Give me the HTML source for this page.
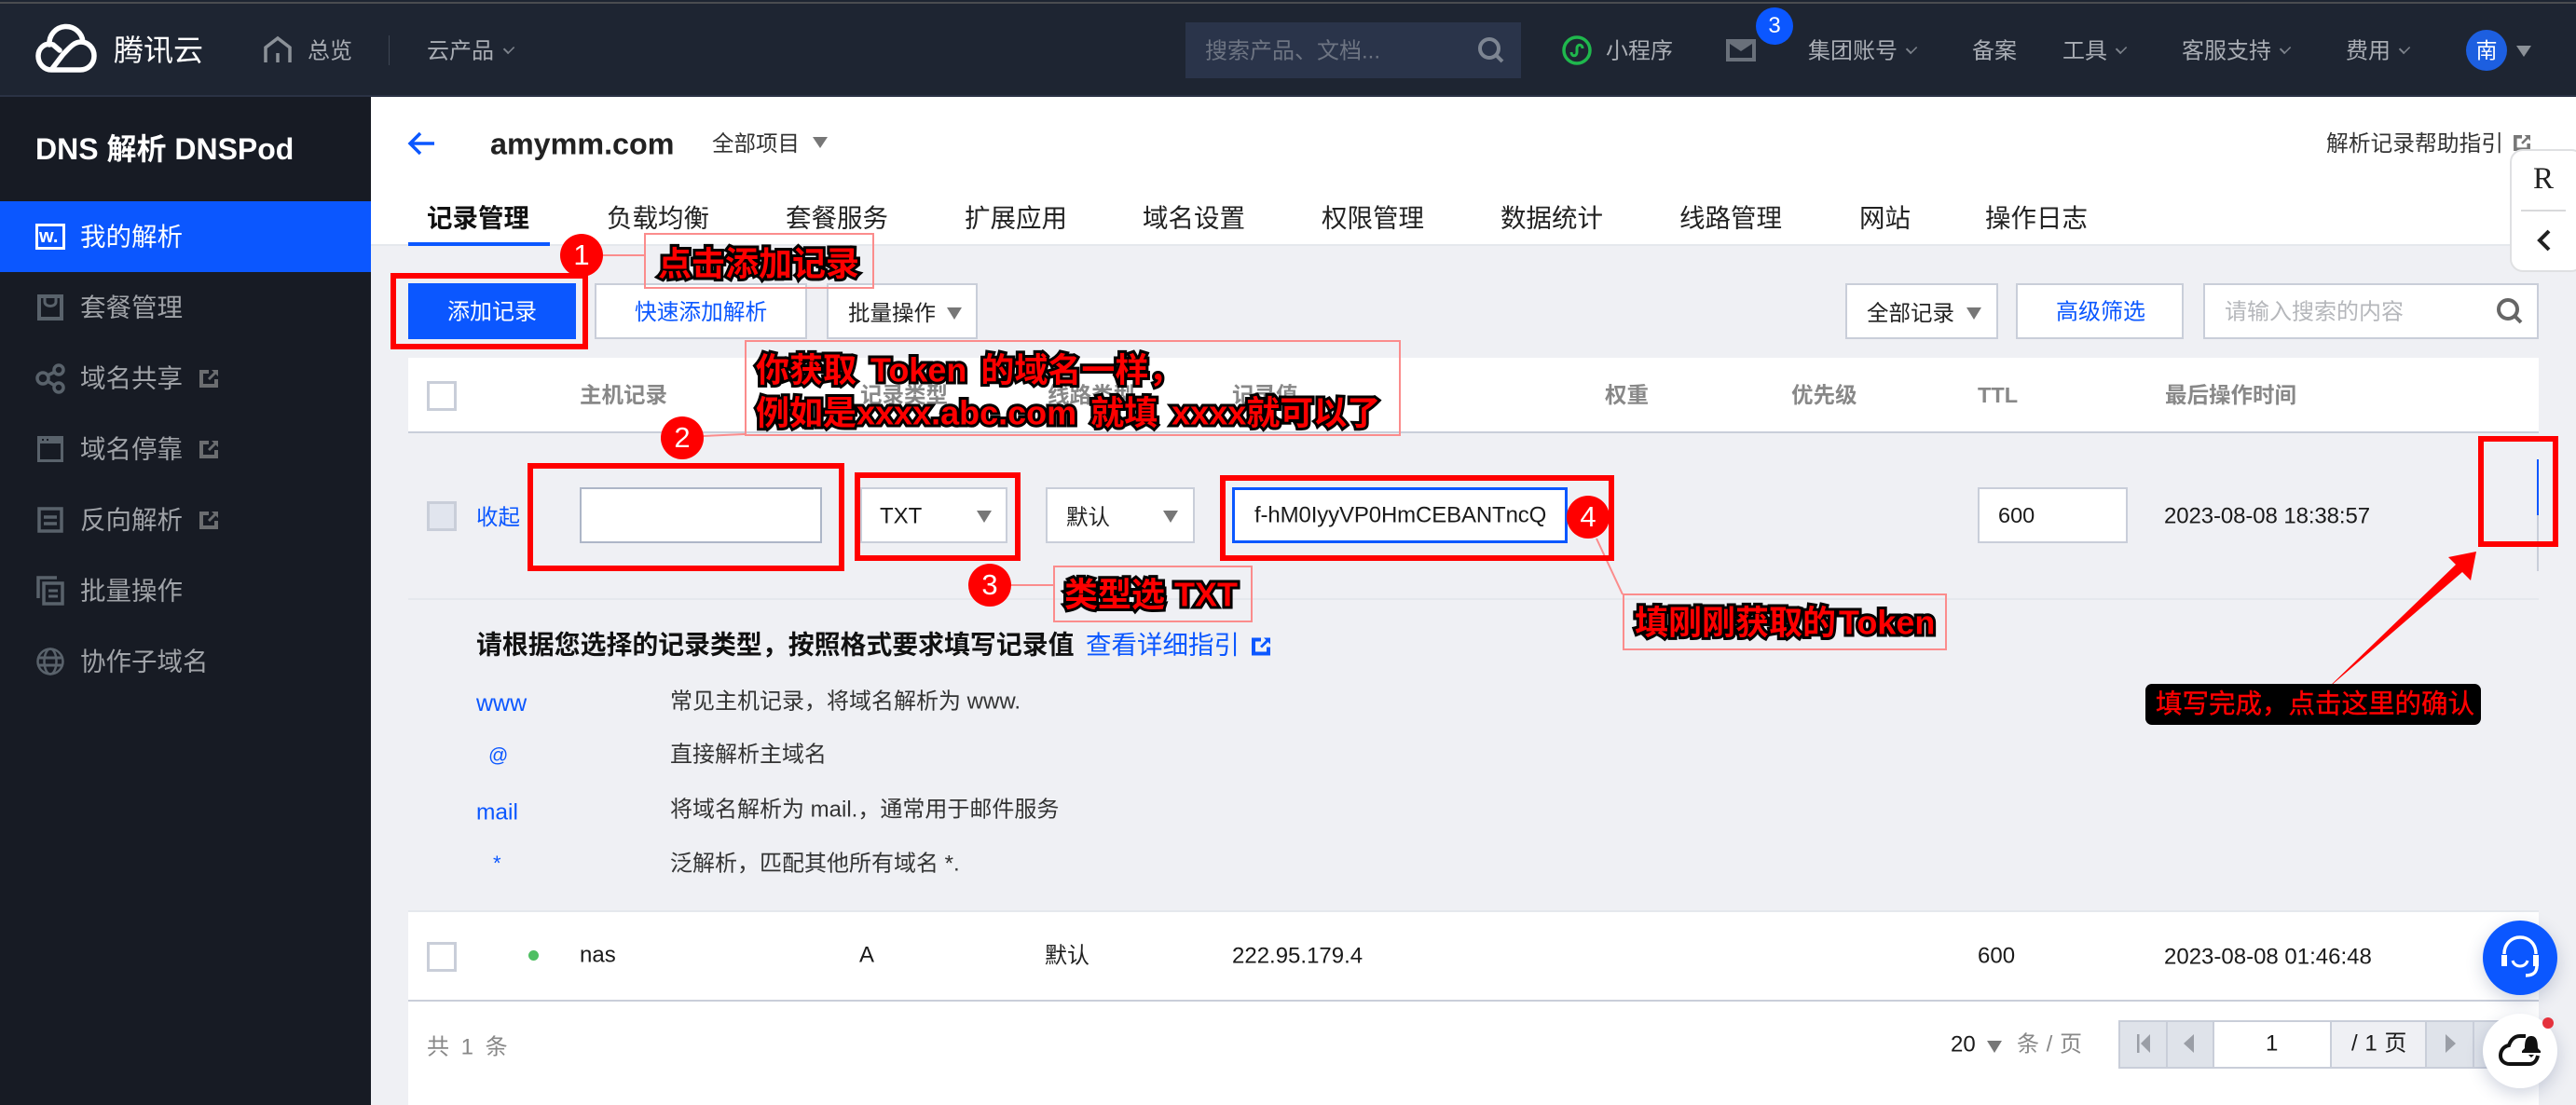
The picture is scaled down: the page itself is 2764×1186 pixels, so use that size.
<!DOCTYPE html>
<html lang="zh-CN"><head><meta charset="utf-8"><title>DNS 解析 DNSPod</title>
<style>
*{box-sizing:border-box}
html,body{margin:0;padding:0;width:2764px;height:1186px;overflow:hidden;background:#eff0f4}
body{position:relative;font-family:"Liberation Sans","Noto Sans CJK SC",sans-serif;font-size:24px;color:#1a1a1a}
.b{position:absolute}
.t{position:absolute;white-space:nowrap;line-height:1.2;transform:translateY(-50%)}
.nav{color:#a9adb4}
.side{font-size:27.5px;color:#a0a3a8;left:86px}
.tab{font-size:27.5px;top:234px;color:#222}
.hd{top:424px;color:#888;font-size:23.5px;font-weight:bold}
.ctl{position:absolute;background:#fff;border:2px solid #c9ced9}
.car{position:absolute;width:0;height:0;border-left:8px solid transparent;border-right:8px solid transparent;border-top:13px solid #777}
.nc{position:absolute;width:10px;height:10px;border-right:2px solid #7d838c;border-bottom:2px solid #7d838c;transform:rotate(45deg) scaleX(.75);top:47px}
.chk{position:absolute;left:458px;width:32px;height:32px;background:#fff;border:3px solid #c9ced9}
.red{position:absolute;border:6px solid #f00;z-index:5}
.box{position:absolute;border:2px solid #fb8c8c;z-index:5}
.num{position:absolute;width:46px;height:46px;border-radius:50%;background:#f00;color:#fff;text-align:center;line-height:46px;font-size:31px;z-index:7}
.an{position:absolute;white-space:nowrap;line-height:1.2;color:#f00;font-size:36px;font-weight:bold;-webkit-text-stroke:6px #000;paint-order:stroke fill;transform:translateY(-50%);z-index:6}
.blue{color:#0b57ff}
svg{position:absolute;overflow:visible}
</style></head><body>

<!-- top bar -->
<div class="b" style="left:0;top:0;width:2764px;height:104px;background:#1e2532;border-bottom:2px solid #2a3244"></div>
<div class="b" style="left:0;top:2px;width:2764px;height:2px;background:#4a4c50"></div>
<svg style="left:38px;top:30px" width="66" height="48" viewBox="0 0 66 48" fill="none" stroke="#fff" stroke-width="5.5" stroke-linecap="round"><path d="M15 18A13 13 0 0 1 51 15"/><path d="M26 24L19 18C9 15 3 23 3 30 3 39 10 45 17 45H48C56 45 63 39 63 30 63 21 56 15 49 15 41 15 36 22 30 28L17 45"/></svg>
<div class="t" style="left:122px;top:54px;font-size:32px;color:#fff">腾讯云</div>
<svg style="left:283px;top:39px" width="30" height="28" viewBox="0 0 30 28" fill="none" stroke="#8b9198" stroke-width="3.5"><path d="M2 28V12L15 2 28 12V28"/><path d="M15 18V28"/></svg>
<div class="t nav" style="left:330px;top:55.500px">总览</div>
<div class="b" style="left:417px;top:38px;width:1px;height:32px;background:#3e4654"></div>
<div class="t nav" style="left:458px;top:55.500px">云产品</div><div class="nc" style="left:541px"></div>
<div class="b" style="left:1272px;top:24px;width:360px;height:60px;background:#2a344a"></div>
<div class="t" style="left:1293px;top:55.500px;color:#6d7482">搜索产品、文档...</div>
<svg style="left:1586px;top:40px" width="28" height="28" viewBox="0 0 28 28" fill="none" stroke="#7d8592" stroke-width="4"><circle cx="12" cy="12" r="10"/><path d="M19 19l7 7"/></svg>
<svg style="left:1676px;top:38px" width="32" height="32" viewBox="0 0 32 32" fill="none" stroke="#1fb84d" stroke-width="3.5"><circle cx="16" cy="16" r="14"/><path d="M10 18c0 5 6 5 6 0v-4c0-5 6-5 6 0" stroke-width="3"/></svg>
<div class="t nav" style="left:1723px;top:55.500px">小程序</div>
<svg style="left:1852px;top:42px" width="32" height="24" viewBox="0 0 32 24"><path fill="#69707a" d="M0 0H32V24H0ZM4 5V20H28V5L16 13Z"/></svg>
<div class="b" style="left:1884px;top:8px;width:40px;height:40px;border-radius:50%;background:#0b57ff;color:#fff;text-align:center;line-height:40px;font-size:24px">3</div>
<div class="t nav" style="left:1940px;top:55.500px">集团账号</div><div class="nc" style="left:2046px"></div>
<div class="t nav" style="left:2116px;top:55.500px">备案</div>
<div class="t nav" style="left:2213px;top:55.500px">工具</div><div class="nc" style="left:2271px"></div>
<div class="t nav" style="left:2341px;top:55.500px">客服支持</div><div class="nc" style="left:2447px"></div>
<div class="t nav" style="left:2517px;top:55.500px">费用</div><div class="nc" style="left:2575px"></div>
<div class="b" style="left:2646px;top:32px;width:44px;height:44px;border-radius:50%;background:#1d5fe0;color:#fff;text-align:center;line-height:44px;font-size:23px">南</div>
<div class="car" style="left:2700px;top:49px;border-top-color:#8b9198;border-top-width:12px"></div>

<!-- sidebar -->
<div class="b" style="left:0;top:104px;width:398px;height:1082px;background:#171b24"></div>
<div class="t" style="left:38px;top:160px;font-size:32px;font-weight:bold;color:#fff">DNS 解析 DNSPod</div>
<div class="b" style="left:0;top:216px;width:398px;height:76px;background:#0b57ff"></div>
<svg style="left:38px;top:240px" width="32" height="28" viewBox="0 0 32 28"><path fill="#fff" fill-rule="evenodd" d="M0 0H32V28H0ZM3 3V25H29V3Z"/><text x="4" y="20" font-family="Liberation Sans" font-size="20" font-weight="bold" fill="#fff">w.</text></svg>
<div class="t side" style="top:254px;color:#fff">我的解析</div>
<svg style="left:40px;top:316px" width="28" height="28" viewBox="0 0 28 28" fill="none" stroke="#59626b" stroke-width="4"><path d="M2 2H26V26H2Z"/><path d="M8 4V8C8 14 20 14 20 8V4" stroke-width="3"/></svg>
<div class="t side" style="top:330px">套餐管理</div>
<svg style="left:38px;top:390px" width="32" height="32" viewBox="0 0 32 32" fill="none" stroke="#59626b" stroke-width="3.5"><circle cx="8" cy="16" r="6"/><circle cx="25" cy="7" r="5"/><circle cx="25" cy="26" r="5"/><path d="M13 13l8-4M13 19l8 5"/></svg>
<div class="t side" style="top:406px">域名共享</div>
<svg style="left:40px;top:468px" width="28" height="28" viewBox="0 0 28 28"><path fill="#59626b" d="M0 0H28V28H0ZM3 8V25H25V8Z"/><path fill="#171b24" d="M5 3h2v2H5zM10 3h2v2h-2z"/></svg>
<div class="t side" style="top:482px">域名停靠</div>
<svg style="left:40px;top:544px" width="28" height="28" viewBox="0 0 28 28" fill="none" stroke="#59626b" stroke-width="3.5"><path d="M2 2H26V26H2Z"/><path d="M7 11H21M7 18H21"/></svg>
<div class="t side" style="top:558px">反向解析</div>
<svg style="left:39px;top:618px" width="30" height="32" viewBox="0 0 30 32" fill="none" stroke="#59626b" stroke-width="3.5"><path d="M2 24V2H22"/><path d="M8 8H28V30H8Z"/><path d="M13 16H23M13 22H23" stroke-width="3"/></svg>
<div class="t side" style="top:634px">批量操作</div>
<svg style="left:39px;top:695px" width="30" height="30" viewBox="0 0 30 30" fill="none" stroke="#59626b" stroke-width="2.5"><circle cx="15" cy="15" r="13.5"/><ellipse cx="15" cy="15" rx="6.5" ry="13.5"/><path d="M2 11H28M2 19H28" stroke-width="3"/></svg>
<div class="t side" style="top:710px">协作子域名</div>
<svg style="left:214px;top:397px" width="20" height="19" viewBox="0 0 20 19"><path fill="#6b6d70" d="M0 0H10V4H4V15H16V10H20V19H0ZM13 0H20V7L17.500 4.500 11 11 9 9 15.500 2.500Z"/></svg>
<svg style="left:214px;top:473px" width="20" height="19" viewBox="0 0 20 19"><path fill="#6b6d70" d="M0 0H10V4H4V15H16V10H20V19H0ZM13 0H20V7L17.500 4.500 11 11 9 9 15.500 2.500Z"/></svg>
<svg style="left:214px;top:549px" width="20" height="19" viewBox="0 0 20 19"><path fill="#6b6d70" d="M0 0H10V4H4V15H16V10H20V19H0ZM13 0H20V7L17.500 4.500 11 11 9 9 15.500 2.500Z"/></svg>

<!-- header -->
<div class="b" style="left:398px;top:104px;width:2366px;height:158px;background:#fff"></div>
<div class="b" style="left:398px;top:262px;width:2366px;height:2px;background:#e5e8ed"></div>
<svg style="left:438px;top:141px" width="28" height="26" viewBox="0 0 28 26" fill="none" stroke="#0b57ff" stroke-width="3.500"><path d="M13 2L2 13 13 24M2 13H28"/></svg>
<div class="t" style="left:526px;top:155px;font-size:32.3px;font-weight:bold;color:#222">amymm.com</div>
<div class="t" style="left:764px;top:154px;font-size:23.5px;color:#333">全部项目</div>
<div class="car" style="left:872px;top:147px;border-left-width:8px;border-right-width:8px;border-top-width:12px"></div>
<div class="t" style="left:2496px;top:155px;font-size:23.75px;color:#333">解析记录帮助指引</div>
<svg style="left:2696px;top:145px" width="20" height="17" viewBox="0 0 20 19"><path fill="#777" d="M0 0H10V4H4V15H16V10H20V19H0ZM13 0H20V7L17.500 4.500 11 11 9 9 15.500 2.500Z"/></svg>

<div class="t tab" style="left:458px;font-weight:bold;color:#111">记录管理</div>
<div class="b" style="left:438px;top:260px;width:152px;height:4px;background:#0b57ff"></div>
<div class="t tab" style="left:651px">负载均衡</div>
<div class="t tab" style="left:843px">套餐服务</div>
<div class="t tab" style="left:1035px">扩展应用</div>
<div class="t tab" style="left:1226px">域名设置</div>
<div class="t tab" style="left:1418px">权限管理</div>
<div class="t tab" style="left:1610px">数据统计</div>
<div class="t tab" style="left:1802px">线路管理</div>
<div class="t tab" style="left:1995px">网站</div>
<div class="t tab" style="left:2130px">操作日志</div>

<!-- toolbar -->
<div class="b" style="left:438px;top:304px;width:180px;height:60px;background:#0b57ff"></div>
<div class="t" style="left:480px;top:335.500px;color:#fff">添加记录</div>
<div class="ctl" style="left:638px;top:304px;width:228px;height:60px"></div>
<div class="t blue" style="left:681px;top:335.500px;font-size:23.7px">快速添加解析</div>
<div class="ctl" style="left:887px;top:304px;width:162px;height:60px"></div>
<div class="t" style="left:910px;top:335.500px;font-size:23.5px;color:#222">批量操作</div>
<div class="car" style="left:1016px;top:330px"></div>
<div class="ctl" style="left:1980px;top:304px;width:164px;height:60px"></div>
<div class="t" style="left:2003px;top:335.500px;font-size:23.5px;color:#222">全部记录</div>
<div class="car" style="left:2110px;top:330px"></div>
<div class="ctl" style="left:2163px;top:304px;width:180px;height:60px"></div>
<div class="t blue" style="left:2206px;top:335.500px">高级筛选</div>
<div class="ctl" style="left:2364px;top:304px;width:360px;height:60px"></div>
<div class="t" style="left:2387px;top:335.500px;color:#b5b7bb">请输入搜索的内容</div>
<svg style="left:2679px;top:320px" width="28" height="28" viewBox="0 0 28 28" fill="none" stroke="#666" stroke-width="4"><circle cx="12" cy="12" r="10"/><path d="M19 19l7 7"/></svg>

<!-- table -->
<div class="b" style="left:438px;top:384px;width:2286px;height:79px;background:#fff"></div>
<div class="b" style="left:438px;top:463px;width:2286px;height:2px;background:#c9ced9"></div>
<div class="chk" style="top:409px"></div>
<div class="t hd" style="left:622px">主机记录</div>
<div class="t hd" style="left:923px">记录类型</div>
<div class="t hd" style="left:1124px">线路类型</div>
<div class="t hd" style="left:1322px">记录值</div>
<div class="t hd" style="left:1722px">权重</div>
<div class="t hd" style="left:1922px">优先级</div>
<div class="t hd" style="left:2122px">TTL</div>
<div class="t hd" style="left:2323px">最后操作时间</div>

<div class="chk" style="top:538px;background:#e1e5ee"></div>
<div class="t blue" style="left:511px;top:555px;font-size:23.5px">收起</div>
<div class="ctl" style="left:622px;top:523px;width:260px;height:60px;border:2px solid #adb6c7"></div>
<div class="ctl" style="left:923px;top:523px;width:158px;height:60px"></div>
<div class="t" style="left:944px;top:555px">TXT</div>
<div class="car" style="left:1048px;top:548px"></div>
<div class="ctl" style="left:1122px;top:523px;width:160px;height:60px"></div>
<div class="t" style="left:1144px;top:555px;font-size:23.5px;color:#222">默认</div>
<div class="car" style="left:1248px;top:548px"></div>
<div class="ctl" style="left:1322px;top:523px;width:360px;height:60px;border:3px solid #0b57ff"></div>
<div class="t" style="left:1346px;top:554px;letter-spacing:-.13px">f-hM0IyyVP0HmCEBANTncQ</div>
<div class="ctl" style="left:2122px;top:523px;width:161px;height:60px"></div>
<div class="t" style="left:2144px;top:553px;font-size:23.5px">600</div>
<div class="t" style="left:2322px;top:555px;font-size:24px;letter-spacing:-.1px">2023-08-08 18:38:57</div>
<div class="b" style="left:2722px;top:493px;width:2px;height:60px;background:#0b57ff"></div>
<div class="b" style="left:2722px;top:553px;width:2px;height:60px;background:#c9ced9"></div>
<div class="b" style="left:438px;top:642px;width:2286px;height:2px;background:#e5e8ed"></div>

<!-- guide -->
<div class="t" style="left:511px;top:692px;font-size:27.9px;font-weight:bold;color:#111">请根据您选择的记录类型，按照格式要求填写记录值</div>
<div class="t blue" style="left:1165px;top:692px;font-size:27.5px">查看详细指引</div>
<svg style="left:1343px;top:684px" width="20" height="20" viewBox="0 0 20 19"><path fill="#0b57ff" d="M0 0H10V4H4V15H16V10H20V19H0ZM13 0H20V7L17.500 4.500 11 11 9 9 15.500 2.500Z"/></svg>
<div class="t blue" style="left:511px;top:755px;font-size:25px">www</div>
<div class="t blue" style="left:524px;top:811px;font-size:21px">@</div>
<div class="t blue" style="left:511px;top:872px;font-size:24.5px">mail</div>
<div class="t blue" style="left:529px;top:927px;font-size:22px">*</div>
<div class="t" style="left:719px;top:753.500px;color:#333">常见主机记录，将域名解析为 www.</div>
<div class="t" style="left:719px;top:811px;color:#333">直接解析主域名</div>
<div class="t" style="left:719px;top:870px;color:#333">将域名解析为 mail.，通常用于邮件服务</div>
<div class="t" style="left:719px;top:928px;color:#333">泛解析，匹配其他所有域名 *.</div>

<!-- row -->
<div class="b" style="left:438px;top:977px;width:2286px;height:209px;background:#fff"></div>
<div class="b" style="left:438px;top:977px;width:2286px;height:2px;background:#e5e8ed"></div>
<div class="b" style="left:438px;top:1073px;width:2286px;height:2px;background:#c9ced9"></div>
<div class="chk" style="top:1011px"></div>
<div class="b" style="left:567px;top:1020px;width:11px;height:11px;border-radius:50%;background:#4fbf63"></div>
<div class="t" style="left:622px;top:1026px">nas</div>
<div class="t" style="left:922px;top:1026px">A</div>
<div class="t" style="left:1121px;top:1027px;color:#222">默认</div>
<div class="t" style="left:1322px;top:1027px">222.95.179.4</div>
<div class="t" style="left:2122px;top:1027px">600</div>
<div class="t" style="left:2322px;top:1028px">2023-08-08 01:46:48</div>

<!-- footer -->
<div class="t" style="left:458px;top:1125px;color:#888;word-spacing:6px">共 1 条</div>
<div class="t" style="left:2093px;top:1122px">20</div>
<div class="car" style="left:2132px;top:1117px"></div>
<div class="t" style="left:2164px;top:1122px;color:#888;word-spacing:1px">条 / 页</div>
<div class="b" style="left:2273px;top:1095px;width:430px;height:52px;border:2px solid #c9ced9;background:#dfe3ea"></div>
<div class="b" style="left:2324px;top:1097px;width:2px;height:48px;background:#c9ced9"></div>
<div class="b" style="left:2374px;top:1097px;width:128px;height:48px;background:#fff;border-left:2px solid #c9ced9;border-right:2px solid #c9ced9"></div>
<div class="b" style="left:2502px;top:1097px;width:102px;height:48px;background:#eff0f4;border-right:2px solid #c9ced9"></div>
<div class="b" style="left:2653px;top:1097px;width:2px;height:48px;background:#c9ced9"></div>
<svg style="left:2293px;top:1110px" width="14" height="20" viewBox="0 0 14 20"><path fill="#9a9ea6" d="M0 0H2.500V20H0ZM14 0V20L4 10Z"/></svg>
<svg style="left:2343px;top:1110px" width="12" height="20" viewBox="0 0 12 20"><path fill="#9a9ea6" d="M11 0V20L0 10Z"/></svg>
<svg style="left:2623px;top:1110px" width="12" height="20" viewBox="0 0 12 20"><path fill="#9a9ea6" d="M1 0V20L12 10Z"/></svg>
<div class="t" style="left:2431px;top:1121px">1</div>
<div class="t" style="left:2523px;top:1121px;word-spacing:1px">/ 1 页</div>

<!-- floating -->
<div class="b" style="left:2693px;top:160px;width:80px;height:132px;background:#fff;border:2px solid #dfe0e2;border-radius:14px;z-index:3"></div>
<div class="t" style="left:2718px;top:193px;font-family:'Liberation Serif',serif;font-size:33px;color:#222;z-index:4">R</div>
<div class="b" style="left:2705px;top:225px;width:48px;height:2px;background:#d8d9db;z-index:4"></div>
<svg style="left:2721px;top:246px;z-index:4" width="16" height="24" viewBox="0 0 16 24" fill="none" stroke="#222" stroke-width="4"><path d="M14 2L4 12 14 22"/></svg>

<div class="b" style="left:2664px;top:988px;width:80px;height:80px;border-radius:50%;background:#0b57ff;box-shadow:0 6px 18px rgba(40,60,110,.22);z-index:8"></div>
<svg style="left:2664px;top:988px;z-index:9" width="80" height="80" viewBox="0 0 80 80" fill="none" stroke="#fff" stroke-width="3.500"><path d="M23 36C23 12 57 12 57 36"/><path d="M20 37h6v12h-6zM54 37h6v12h-6z" fill="#fff" stroke="none"/><path d="M32 43C34 51 46 51 48 43" stroke-width="3"/><path d="M58 48C58 56 54 59 46 59"/></svg>
<div class="b" style="left:2664px;top:1088px;width:80px;height:80px;border-radius:50%;background:#fff;box-shadow:0 6px 18px rgba(40,60,110,.22);z-index:8"></div>
<svg style="left:2664px;top:1088px;z-index:9" width="80" height="80" viewBox="0 0 80 80" fill="none" stroke="#111" stroke-width="4"><path d="M46 24H40C32 24 29 31 28 34C22 35 19 40 19 45C19 51 24 54 29 54H50C55 54 58 50 59 45"/><path fill="#111" stroke="none" d="M45 37C45 28 47 24 52 24 57 24 59 28 59 37L62 40V42H42V40ZM49 44H55L52 47Z"/></svg>
<div class="b" style="left:2728px;top:1092px;width:12px;height:12px;border-radius:50%;background:#e5313c;z-index:10"></div>

<!-- annotations -->
<svg style="left:0;top:0;z-index:5" width="2764" height="1186"><g stroke="#fb8c8c" stroke-width="2" fill="none"><path d="M647 274H692"/><path d="M755 468L799 466"/><path d="M1050 628H1130"/><path d="M1713 578L1741 638"/></g></svg>
<div class="red" style="left:419px;top:293px;width:212px;height:82px"></div>
<div class="red" style="left:566px;top:497px;width:340px;height:116px"></div>
<div class="red" style="left:917px;top:507px;width:178px;height:95px"></div>
<div class="red" style="left:1309px;top:510px;width:423px;height:92px"></div>
<div class="red" style="left:2659px;top:468px;width:86px;height:119px"></div>

<div class="num" style="left:601px;top:251px">1</div>
<div class="num" style="left:709px;top:447px">2</div>
<div class="num" style="left:1039px;top:605px">3</div>
<div class="num" style="left:1681px;top:532px">4</div>

<div class="box" style="left:691px;top:250px;width:247px;height:60px"></div>
<div class="an" style="left:706px;top:283px">点击添加记录</div>
<div class="box" style="left:799px;top:365px;width:704px;height:103px"></div>
<div class="an" style="left:811px;top:397px;word-spacing:5px">你获取 Token 的域名一样，</div>
<div class="an" style="left:811px;top:443px;word-spacing:5px">例如是xxxx.abc.com 就填 xxxx就可以了</div>
<div class="box" style="left:1130px;top:607px;width:214px;height:61px"></div>
<div class="an" style="left:1142px;top:638px">类型选 TXT</div>
<div class="box" style="left:1741px;top:637px;width:348px;height:61px"></div>
<div class="an" style="left:1754px;top:668px;word-spacing:-7px">填刚刚获取的 Token</div>

<svg style="left:0;top:0;z-index:6" width="2764" height="1186"><path fill="#f00" d="M2494 742L2635 606 2627 598 2657 592 2651 623 2642 614Z"/></svg>
<div class="b" style="left:2302px;top:734px;width:360px;height:44px;background:#000;border-radius:7px;z-index:6"></div>
<div class="t" style="left:2313px;top:756px;font-size:28.5px;color:#f00;z-index:7;-webkit-text-stroke:.4px #f00">填写完成，点击这里的确认</div>

</body></html>
